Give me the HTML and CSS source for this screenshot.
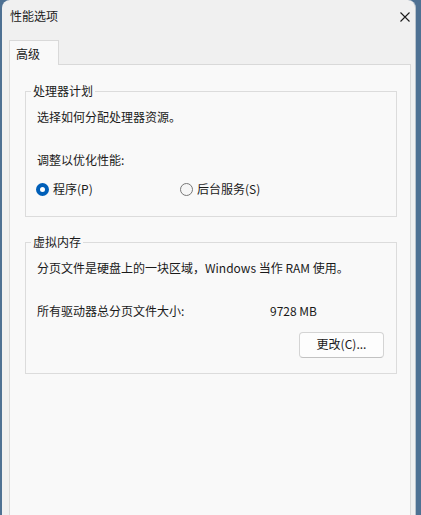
FILE: index.html
```html
<!DOCTYPE html>
<html lang="zh-CN">
<head>
<meta charset="utf-8">
<title>性能选项</title>
<link rel="stylesheet" href="styles.css">
</head>
<body>
<div class="window">
  <div class="titlebar">
    <span class="title">性能选项</span>
    <svg class="close" width="10" height="10" viewBox="0 0 10 10"><path d="M0.5 0.5L9.5 9.5M9.5 0.5L0.5 9.5" stroke="#1b1b1b" stroke-width="1.1" fill="none"/></svg>
  </div>
  <div class="tabs">
    <div class="tab">高级</div>
  </div>
  <div class="panel">
    <fieldset class="group group-cpu">
      <legend>处理器计划</legend>
      <p class="line first">选择如何分配处理器资源。</p>
      <p class="line">调整以优化性能:</p>
      <div class="radios">
        <label class="radio"><span class="dot checked"></span>程序(P)</label>
        <label class="radio"><span class="dot"></span>后台服务(S)</label>
      </div>
    </fieldset>
    <fieldset class="group group-mem">
      <legend>虚拟内存</legend>
      <p class="line first">分页文件是硬盘上的一块区域，Windows 当作 RAM 使用。</p>
      <div class="size-row">
        <span class="size-label">所有驱动器总分页文件大小:</span>
        <span class="size-value">9728 MB</span>
      </div>
      <div class="btn-row">
        <button class="btn" type="button">更改(C)...</button>
      </div>
    </fieldset>
  </div>
</div>
</body>
</html>
```
FILE: styles.css
```css
html, body {
  margin: 0;
  padding: 0;
  height: 515px;
  overflow: hidden;
}
body {
  background: #4e7193;
  font-family: "Noto Sans CJK SC", "Noto Sans", sans-serif;
  font-size: 12px;
  line-height: 16px;
  color: #1a1a1a;
}
.window {
  margin-left: 2px;
  width: 413px;
  height: 515px;
  background: #f0f0f0;
  border-right: 1px solid #b9c3cc;
  border-radius: 8px 8px 0 0;
  display: flex;
  flex-direction: column;
}
.titlebar {
  height: 32px;
  display: flex;
  align-items: center;
  justify-content: space-between;
  padding: 0 5px 2px 8px;
}
.title {
  font-size: 12px;
}
.close {
  display: block;
  margin-top: 2px;
}
.tabs {
  margin-top: 6px;
  margin-left: 7px;
  display: flex;
}
.tab {
  width: 50px;
  height: 25px;
  box-sizing: border-box;
  padding: 5px 0 0 6px;
  background: #f9f9f9;
  border: 1px solid #d9d9d9;
  border-bottom: none;
  margin-bottom: -1px;
  position: relative;
  z-index: 1;
}
.panel {
  flex: 1;
  margin: 0 4px 0 7px;
  background: #f9f9f9;
  border: 1px solid #d9d9d9;
  border-bottom: none;
  padding: 18px 13px 0 15px;
}
.group {
  margin: 0;
  border: 1px solid #dcdcdc;
  padding: 10px 12px 19px 11px;
  min-width: 0;
}
.group-mem {
  margin-top: 17px;
  padding-bottom: 15px;
}
legend {
  padding: 0 2px;
  margin-left: -6px;
  line-height: 16px;
}
.line {
  margin: 0;
}
.line.first {
  margin-bottom: 27px;
}
.radios {
  margin-top: 13px;
  display: grid;
  grid-template-columns: 144px auto;
}
.radio {
  display: flex;
  align-items: center;
}
.dot {
  width: 13px;
  height: 13px;
  box-sizing: border-box;
  border-radius: 50%;
  border: 1px solid #777;
  background: #f6f6f6;
  margin: 0 4px 0 -1px;
}
.dot.checked {
  border: 4px solid #005fb8;
  background: #fff;
}
.size-row {
  display: grid;
  grid-template-columns: 233px auto;
}
.btn-row {
  margin-top: 13px;
  display: flex;
  justify-content: flex-end;
}
.btn {
  width: 85px;
  height: 26px;
  font: inherit;
  color: #1a1a1a;
  background: #fdfdfd;
  border: 1px solid #d4d4d4;
  border-bottom-color: #c2c2c2;
  border-radius: 4px;
  padding: 0 0 2px;
}
```
